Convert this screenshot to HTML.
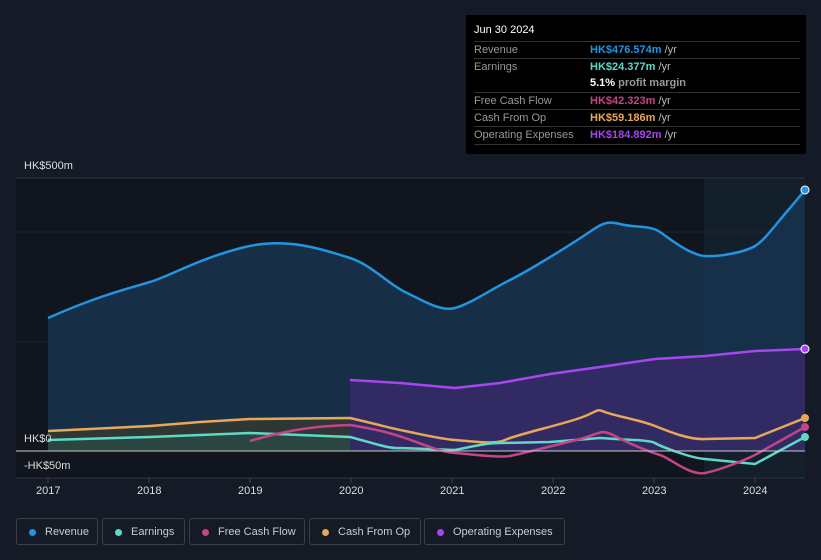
<!DOCTYPE html>
<html><head><style>
body{margin:0;background:#151b26;width:821px;height:560px;overflow:hidden;font-family:"Liberation Sans",sans-serif;position:relative}
.tt{position:absolute;left:466px;top:15px;width:340px;height:139px;background:#000;border-radius:2px}
.tt .h{position:absolute;left:8px;top:9px;color:#fff;font-size:11px}
.row{position:absolute;left:8px;width:326px;border-top:1px solid #333;font-size:11px;color:#999;height:17px;line-height:17px}
.row span{position:absolute;left:116px;font-weight:bold}
.row i{font-style:normal;color:#bbb;font-weight:normal}
.lg{position:absolute;top:518px;height:27px;border:1px solid #3a3f4a;border-radius:3px;color:#ccc;font-size:11px;line-height:27px;box-sizing:border-box}
.lg b{position:absolute;left:12px;top:10px;width:7px;height:7px;border-radius:50%}
.lg span{position:absolute;left:28px}
.ax{position:absolute;color:#ddd;font-size:11px}
</style></head><body>
<svg width="821" height="560" style="position:absolute;left:0;top:0">
<rect x="16" y="178" width="789" height="300" fill="#10151e"/>
<rect x="704" y="178" width="101" height="300" fill="#13202c"/>
<line x1="16" y1="178" x2="805" y2="178" stroke="#2e3440"/>
<line x1="16" y1="232" x2="805" y2="232" stroke="#1f2530"/>
<line x1="16" y1="342" x2="805" y2="342" stroke="#1f2530"/>
<line x1="16" y1="478" x2="805" y2="478" stroke="#2e3440"/>
<path d="M48,318 C100,295 130,288 150,282 S200,258 245,247 S330,252 350,258 S390,285 405,292 S440,312 455,308 S490,290 510,280 S570,245 585,235 S605,220 620,224 S650,225 660,232 S690,255 705,256 S745,252 755,246 S775,225 790,208 L805,190 L805,451 L48,451Z" fill="#17344f" opacity=".85"/>
<path d="M350,380 L400,383 L455,388 L500,383 L550,374 L600,367 L655,359 L705,356 L755,351 L805,349 L805,451 L350,451Z" fill="#3a2b6a" opacity=".8"/>
<path d="M48,431 L150,426 L200,422 L250,419 L350,418 L350,451 L48,451Z" fill="#3a3a2e" opacity=".7"/>
<path d="M48,440 L150,437 L250,433 L350,437 L350,451 L48,451Z" fill="#2b4a45" opacity=".8"/>
<path d="M48,318 C100,295 130,288 150,282 S200,258 245,247 S330,252 350,258 S390,285 405,292 S440,312 455,308 S490,290 510,280 S570,245 585,235 S605,220 620,224 S650,225 660,232 S690,255 705,256 S745,252 755,246 S775,225 790,208 L805,190" fill="none" stroke="#2394df" stroke-width="2.5"/>
<path d="M350,380 L400,383 L455,388 L500,383 L550,374 L600,367 L655,359 L705,356 L755,351 L805,349" fill="none" stroke="#a745ef" stroke-width="2.5"/>
<path d="M48,431 L150,426 L200,422 L250,419 L350,418 C380,425 390,428 405,431 S440,439 455,440 S495,445 505,440 S560,425 580,418 S595,408 605,412 S640,420 655,426 S690,440 705,439 L755,438 L805,418" fill="none" stroke="#e8a85a" stroke-width="2.5"/>
<path d="M48,440 L150,437 L250,433 L350,437 C380,445 390,449 400,448 L455,450 C470,447 485,443 500,443 L550,442 L600,438 C630,440 650,440 655,443 S690,458 705,459 L755,464 L805,437" fill="none" stroke="#5fd8c4" stroke-width="2.5"/>
<path d="M250,441 C280,432 310,426 350,425 C380,430 390,433 405,438 S440,452 455,453 S500,458 510,456 S560,444 580,439 S600,428 615,436 S650,452 660,455 S690,476 705,473 S745,460 755,455 L805,427" fill="none" stroke="#c44587" stroke-width="2.5"/>
<line x1="16" y1="451" x2="805" y2="451" stroke="#c8c8c8" stroke-width="1"/>
<circle cx="805" cy="190" r="4" fill="#2394df" stroke="#fff" stroke-width="1"/>
<circle cx="805" cy="349" r="4" fill="#a745ef" stroke="#fff" stroke-width="1"/>
<circle cx="805" cy="418" r="4" fill="#e8a85a"/>
<circle cx="805" cy="427" r="4" fill="#c44587"/>
<circle cx="805" cy="437" r="4" fill="#5fd8c4"/>
<g stroke="#3a404c"><line x1="48" y1="478" x2="48" y2="483"/><line x1="149" y1="478" x2="149" y2="483"/><line x1="250" y1="478" x2="250" y2="483"/><line x1="351" y1="478" x2="351" y2="483"/><line x1="452" y1="478" x2="452" y2="483"/><line x1="553" y1="478" x2="553" y2="483"/><line x1="654" y1="478" x2="654" y2="483"/><line x1="755" y1="478" x2="755" y2="483"/></g>
</svg>
<div class="ax" style="left:24px;top:160px">HK$500m</div>
<div class="ax" style="left:24px;top:433px">HK$0</div>
<div class="ax" style="left:24px;top:460px">-HK$50m</div>
<div class="ax" style="left:36px;top:485px">2017</div>
<div class="ax" style="left:137px;top:485px">2018</div>
<div class="ax" style="left:238px;top:485px">2019</div>
<div class="ax" style="left:339px;top:485px">2020</div>
<div class="ax" style="left:440px;top:485px">2021</div>
<div class="ax" style="left:541px;top:485px">2022</div>
<div class="ax" style="left:642px;top:485px">2023</div>
<div class="ax" style="left:743px;top:485px">2024</div>
<div class="tt"><div class="h">Jun 30 2024</div>
<div class="row" style="top:26px">Revenue<span style="color:#2394df">HK$476.574m <i>/yr</i></span></div>
<div class="row" style="top:43px">Earnings<span style="color:#5fd8c4">HK$24.377m <i>/yr</i></span></div>
<div class="row" style="top:60px;border-top:none"><span style="color:#fff">5.1% <i style="color:#999;font-weight:bold">profit margin</i></span></div>
<div class="row" style="top:77px">Free Cash Flow<span style="color:#c44587">HK$42.323m <i>/yr</i></span></div>
<div class="row" style="top:94px">Cash From Op<span style="color:#e8a85a">HK$59.186m <i>/yr</i></span></div>
<div class="row" style="top:111px">Operating Expenses<span style="color:#a745ef">HK$184.892m <i>/yr</i></span></div>
<div class="row" style="top:129px;height:0"></div>
</div>
<div class="lg" style="left:16px;width:82px"><b style="background:#2394df"></b><span>Revenue</span></div>
<div class="lg" style="left:102px;width:83px"><b style="background:#5fd8c4"></b><span>Earnings</span></div>
<div class="lg" style="left:189px;width:116px"><b style="background:#c44587"></b><span>Free Cash Flow</span></div>
<div class="lg" style="left:309px;width:112px"><b style="background:#e8a85a"></b><span>Cash From Op</span></div>
<div class="lg" style="left:424px;width:141px"><b style="background:#a745ef"></b><span>Operating Expenses</span></div>
</body></html>
